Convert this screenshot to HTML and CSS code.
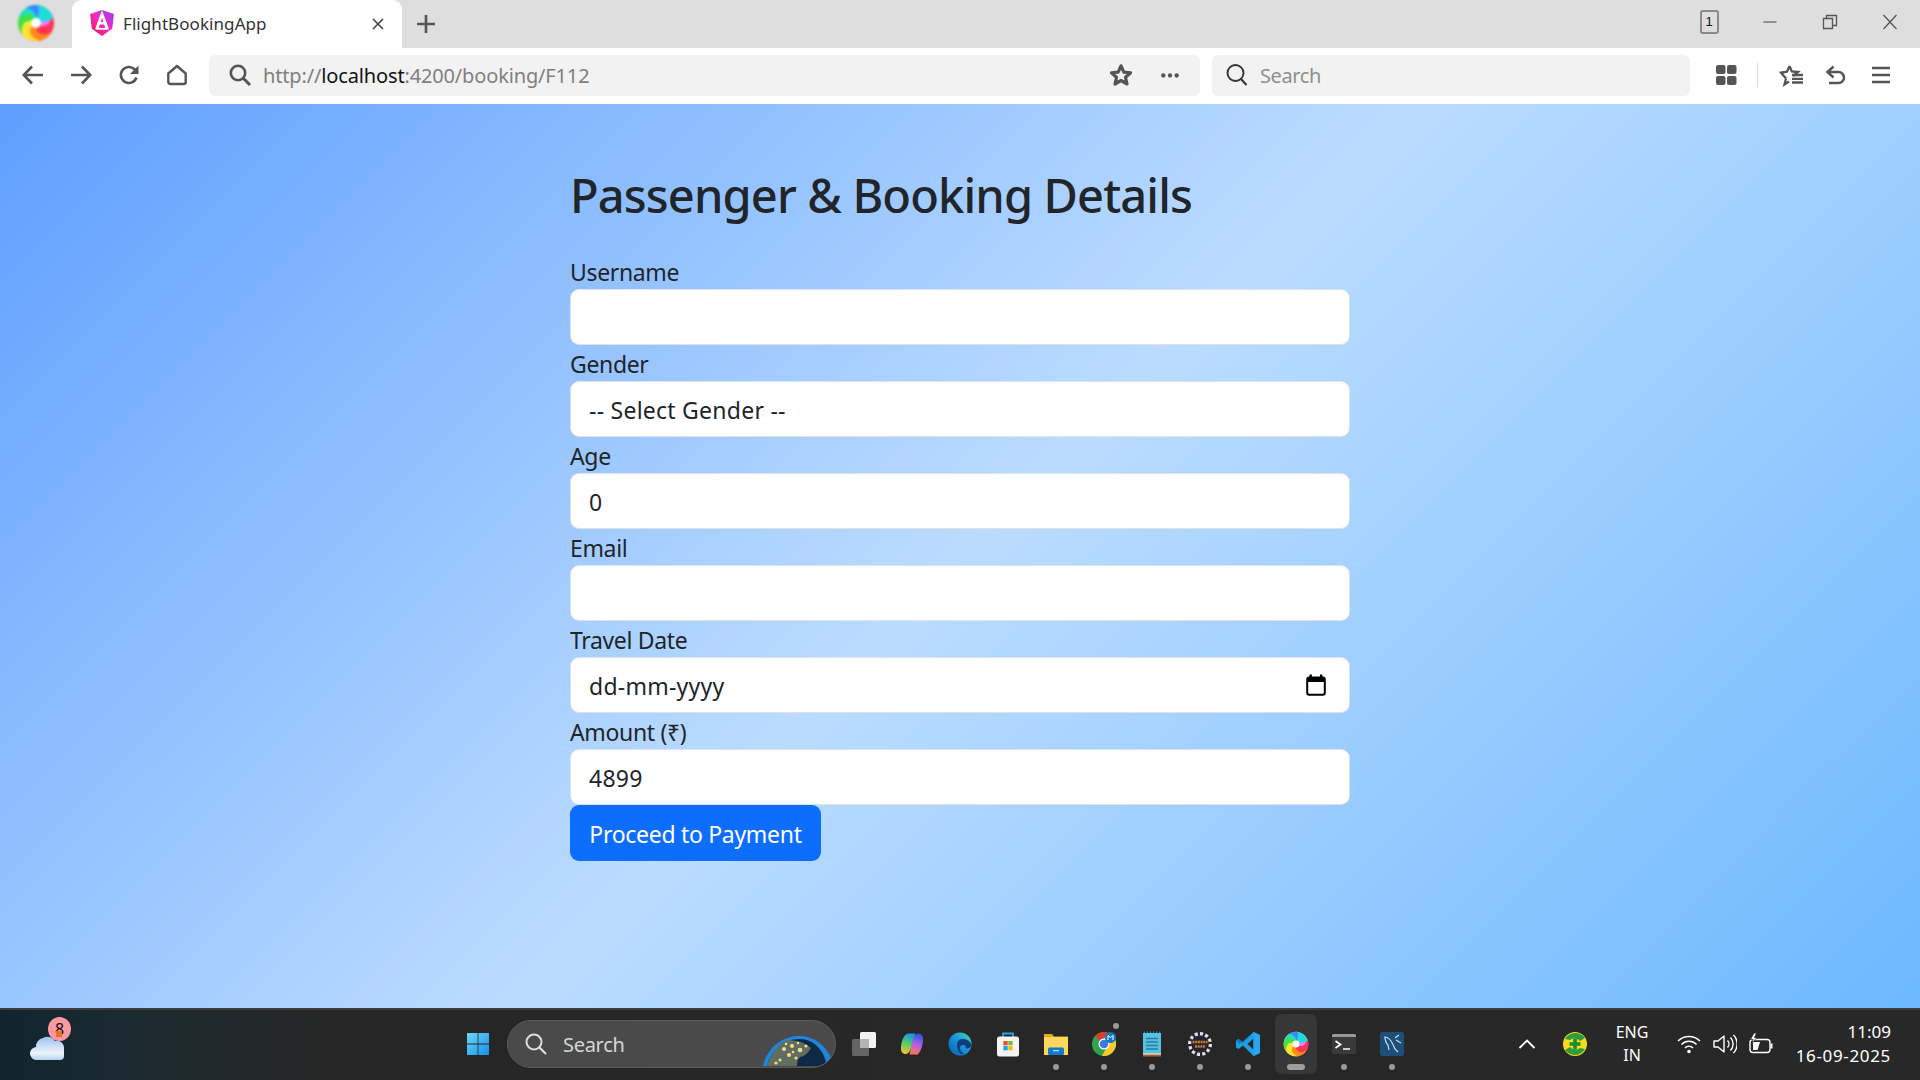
FILE: index.html
```html
<!DOCTYPE html>
<html lang="en">
<head>
<meta charset="utf-8">
<title>FlightBookingApp</title>
<link rel="stylesheet" href="styles.css">
</head>
<body>
<svg class="defs" width="0" height="0" aria-hidden="true">
  <symbol id="swirl" viewBox="-19 -19 38 38">
    <path fill="#f07cff" d="M0-18A18 18 0 0 1 9 15.600C4 10 1 5 3.500-2 10-6 8-14 0-18Z"/>
    <path fill="#ff3350" transform="rotate(60)" d="M0-18A18 18 0 0 1 9 15.600C4 10 1 5 3.500-2 10-6 8-14 0-18Z"/>
    <path fill="#ff8a1a" transform="rotate(120)" d="M0-18A18 18 0 0 1 9 15.600C4 10 1 5 3.500-2 10-6 8-14 0-18Z"/>
    <path fill="#ffe433" transform="rotate(170)" d="M0-18A18 18 0 0 1 9 15.600C4 10 1 5 3.500-2 10-6 8-14 0-18Z"/>
    <path fill="#3fe24a" transform="rotate(230)" d="M0-18A18 18 0 0 1 9 15.600C4 10 1 5 3.500-2 10-6 8-14 0-18Z"/>
    <path fill="#1fdcd8" transform="rotate(285)" d="M0-18A18 18 0 0 1 9 15.600C4 10 1 5 3.500-2 10-6 8-14 0-18Z"/>
    <path fill="#3d86ff" transform="rotate(325)" d="M0-18A18 18 0 0 1 12-13.400C10-9 7-5 3-3 6-8 5-14 0-18Z"/>
    <circle r="5" fill="#fff"/>
  </symbol>
</svg>
<div class="window">
  <header class="tabbar">
    <div class="logo-slot"><svg class="swirl swirl-lg" width="38" height="38"><use href="#swirl"/></svg></div>
    <div class="tab">
      <svg class="favicon" viewBox="0 0 24 24" width="26" height="26">
        <defs><linearGradient id="ng" x1="0" y1="1" x2="1" y2="0"><stop offset="0" stop-color="#f0124f"/><stop offset=".5" stop-color="#f02dc0"/><stop offset="1" stop-color="#9a3cf0"/></linearGradient></defs>
        <path fill="url(#ng)" d="M12 0 23 3.800 21.400 17.200 12 24 2.600 17.200 1 3.800Z"/>
        <path fill="#fff" fill-rule="evenodd" d="M12 0 18 16.500H15.200L14 13.400H10L8.800 16.500H6ZM12 7 10.800 11H13.200Z"/>
        <path fill="#fff" d="M6 16.500h12v1.700H6z"/>
      </svg>
      <span class="tab-title">FlightBookingApp</span>
      <svg class="tab-close" viewBox="0 0 14 14" width="14" height="14"><path d="M2 2l10 10M12 2 2 12" stroke="#444" stroke-width="1.600" fill="none"/></svg>
    </div>
    <div class="slot-48"><svg viewBox="0 0 20 20" width="20" height="20"><path d="M10 1v18M1 10h18" stroke="#555" stroke-width="2.600"/></svg></div>
    <div class="spring"></div>
    <div class="winbtn"><span class="counter">1</span></div>
    <div class="winbtn"><svg viewBox="0 0 16 16" width="16" height="16"><path d="M1.500 8h13" stroke="#666" stroke-width="1.300"/></svg></div>
    <div class="winbtn"><svg viewBox="0 0 16 16" width="16" height="16"><path d="M1.500 4.500h9v10h-9zM4.500 4.500v-3h10v10h-4" fill="none" stroke="#555" stroke-width="1.300"/></svg></div>
    <div class="winbtn"><svg viewBox="0 0 16 16" width="16" height="16"><path d="M1.500 1 14.500 15M14.500 1 1.500 15" stroke="#555" stroke-width="1.300"/></svg></div>
  </header>

  <nav class="toolbar">
    <div class="slot-48"><svg viewBox="0 0 24 24" width="24" height="24"><path d="M22 12H3M11 3.500 2.800 12l8.200 8.500" fill="none" stroke="#555" stroke-width="2.600"/></svg></div>
    <div class="slot-48"><svg viewBox="0 0 24 24" width="24" height="24"><path d="M2 12h19M13 3.500l8.200 8.500-8.200 8.500" fill="none" stroke="#555" stroke-width="2.600"/></svg></div>
    <div class="slot-48"><svg viewBox="0 0 24 24" width="24" height="24"><path d="M19.500 14.500A8 8 0 1 1 17.500 6.200L20 8.500" fill="none" stroke="#555" stroke-width="2.600"/><path d="M21.500 2.500v8.500h-8.500z" fill="#555"/></svg></div>
    <div class="slot-48"><svg viewBox="0 0 24 24" width="24" height="24"><path d="M3.300 10.500 12 3l8.700 7.500v8.500a2 2 0 0 1-2 2H5.300a2 2 0 0 1-2-2Z" fill="none" stroke="#555" stroke-width="2.400" stroke-linejoin="round"/></svg></div>
    <div class="urlbar">
      <svg class="url-icon" viewBox="0 0 24 24" width="24" height="24"><circle cx="10" cy="10" r="7.200" fill="none" stroke="#555" stroke-width="2.600"/><path d="M15.500 15.500 22 22" stroke="#555" stroke-width="3"/></svg>
      <span class="url"><span class="url-dim">http://</span>localhost<span class="url-dim">:4200/booking/F112</span></span>
      <div class="spring"></div>
      <div class="url-action"><svg viewBox="0 0 24 24" width="24" height="24"><path d="M12 2.800l2.800 6.300 6.800.7-5.100 4.500 1.500 6.700-6-3.500-6 3.500 1.500-6.700-5.100-4.500 6.800-.7Z" fill="none" stroke="#555" stroke-width="3.200" stroke-linejoin="round"/></svg></div>
      <div class="url-action"><svg viewBox="0 0 24 8" width="20" height="7"><circle cx="4" cy="4" r="2.600" fill="#555"/><circle cx="12" cy="4" r="2.600" fill="#555"/><circle cx="20" cy="4" r="2.600" fill="#555"/></svg></div>
    </div>
    <div class="searchbar">
      <svg viewBox="0 0 24 24" width="24" height="24"><circle cx="10.500" cy="10" r="8" fill="none" stroke="#333" stroke-width="1.900"/><path d="M16 16l5.500 6" stroke="#333" stroke-width="2.100"/></svg>
      <span class="search-text">Search</span>
    </div>
    <div class="tool tool-apps"><svg viewBox="0 0 24 24" width="24" height="24"><rect x="2" y="2" width="9.500" height="9" rx="2" fill="#555"/><rect x="13" y="2" width="9.500" height="9" rx="2" fill="#555"/><rect x="2" y="13" width="9.500" height="9" rx="2" fill="#555"/><rect x="13" y="13" width="9.500" height="9" rx="2" fill="#555"/></svg></div>
    <div class="tool-divider"></div>
    <div class="tool"><svg viewBox="0 0 26 24" width="26" height="24"><path d="M11.500 3l2.300 5.500 6.200.5-4.700 4M8 15.500 6.500 21.500l4.500-3M8 15.500 3 9.500l6-.8L11.500 3" fill="none" stroke="#555" stroke-width="2.300"/><path d="M14 12h11M14 15.800h11M14 19.500h11" stroke="#555" stroke-width="2.300"/></svg></div>
    <div class="tool"><svg viewBox="0 0 24 24" width="24" height="24"><path d="M6 9h9.500a5.500 5.500 0 0 1 0 11H6" fill="none" stroke="#555" stroke-width="2.500"/><path d="M10.500 3.500 4.500 9l6 5.500" fill="none" stroke="#555" stroke-width="2.500"/></svg></div>
    <div class="tool tool-menu"><svg viewBox="0 0 24 24" width="24" height="24"><path d="M3 5h18M3 12h18M3 19h18" stroke="#555" stroke-width="2.600"/></svg></div>
  </nav>

  <main class="page">
    <form class="booking">
      <h1 class="booking-title">Passenger &amp; Booking Details</h1>
      <label class="label" for="username">Username</label>
      <input class="control" id="username" type="text">
      <label class="label" for="gender">Gender</label>
      <select class="control" id="gender"><option>-- Select Gender --</option></select>
      <label class="label" for="age">Age</label>
      <input class="control" id="age" type="text" value="0">
      <label class="label" for="email">Email</label>
      <input class="control" id="email" type="text">
      <span class="label">Travel Date</span>
      <div class="control control-date">
        <span>dd-mm-yyyy</span>
        <svg viewBox="0 0 20 22" width="20" height="22"><rect x="1.200" y="3.500" width="17.600" height="17.300" rx="2" fill="#fff" stroke="#000" stroke-width="2"/><path d="M1 3.500h18v4.500H1z" fill="#000"/><rect x="3.500" y="0.500" width="2.400" height="4" fill="#000"/><rect x="14" y="0.500" width="2.400" height="4" fill="#000"/></svg>
      </div>
      <label class="label" for="amount">Amount (₹)</label>
      <input class="control" id="amount" type="text" value="4899">
      <button class="submit" type="button">Proceed to Payment</button>
    </form>
  </main>

  <footer class="taskbar">
    <div class="widget">
      <span class="badge">8</span>
      <svg class="cloud" viewBox="0 0 38 30" width="38" height="30"><defs><linearGradient id="cl" x1="0" y1="0" x2="0" y2="1"><stop offset="0" stop-color="#9dbfee"/><stop offset=".7" stop-color="#eef5fd"/><stop offset="1" stop-color="#b5d0f2"/></linearGradient></defs><rect x="26" y="0" width="6" height="6" fill="#e8731c"/><path d="M7 29a6.500 6.500 0 0 1-1-13 8.500 8.500 0 0 1 7-9 9 9 0 0 1 12 3 7 7 0 0 1 9 7v8a4 4 0 0 1-4 4Z" fill="url(#cl)"/></svg>
    </div>
    <div class="slot-48 slot-start"><svg viewBox="0 0 24 24" width="24" height="24"><defs><linearGradient id="wn" x1="0" y1="0" x2="1" y2="1"><stop offset="0" stop-color="#6fd6fb"/><stop offset="1" stop-color="#1590e8"/></linearGradient></defs><path fill="url(#wn)" d="M1 1h10.600v10.600H1zM12.400 1H23v10.600H12.400zM1 12.400h10.600V23H1zM12.400 12.400H23V23H12.400z"/></svg></div>
    <div class="task-search">
      <svg viewBox="0 0 24 24" width="24" height="24"><circle cx="10" cy="10" r="7.500" fill="none" stroke="#ddd" stroke-width="2"/><path d="M15.500 15.500 22 22" stroke="#ddd" stroke-width="2.200"/></svg>
      <span class="task-search-text">Search</span>
      <svg class="globe" viewBox="0 0 70 30" width="70" height="30"><path d="M1 30C5 12 20 0 37 0c14 0 26 8 32 22-3 4-5 6-9 8Z" fill="#1f86dd"/><path d="M5 30C9 14 22 3 37 3c13 0 23 8 27 23-2 2-3 3-6 4Z" fill="#0c2a47"/><path d="M5 30c3-10 8-20 20-26 9 0 17 2 24 8-3 5-6 8-11 9-3 3-3 6-3 9Z" fill="#5f6e5e"/><g fill="#f6dd8e"><circle cx="22" cy="13" r="2"/><circle cx="30" cy="10" r="2"/><circle cx="38" cy="14" r="2.300"/><circle cx="44" cy="10" r="1.600"/><circle cx="27" cy="19" r="2"/><circle cx="18" cy="24" r="1.500"/><circle cx="34" cy="22" r="1.600"/><circle cx="14" cy="27" r="1.600"/><circle cx="24" cy="8" r="1.300"/><circle cx="36" cy="7" r="1.300"/><circle cx="31" cy="16" r="1.300"/></g></svg>
    </div>
    <div class="apps">
      <div class="slot-48"><svg viewBox="0 0 26 26" width="26" height="26"><rect x="9" y="1" width="16" height="16" rx="1.500" fill="#f3f3f3"/><rect x="1" y="8" width="17" height="17" rx="1.500" fill="#6b6b6b" fill-opacity=".9"/><rect x="9" y="8" width="9" height="9" fill="#b5b5b5"/></svg></div>
      <div class="slot-48"><svg viewBox="0 0 24 24" width="24" height="24"><defs><linearGradient id="cpa" x1=".6" y1="0" x2=".4" y2="1"><stop offset="0" stop-color="#1593e6"/><stop offset=".5" stop-color="#4fcf66"/><stop offset="1" stop-color="#f6c02c"/></linearGradient><linearGradient id="cpb" x1=".6" y1="0" x2=".4" y2="1"><stop offset="0" stop-color="#2259d8"/><stop offset=".5" stop-color="#b45ee6"/><stop offset="1" stop-color="#ff7458"/></linearGradient></defs><path d="M8 1.500h7.500L12 13c-1.200 5-3 9-6.500 9C2.500 22 .5 19.500 1 15 1.500 9 4 2 8 1.500Z" fill="url(#cpa)"/><path d="M16 22.500H9.500L12 11c1.200-5 3-9.500 6.500-9.500 3 0 5 2.500 4.500 7-.5 6-3 14-7 14.500Z" fill="url(#cpb)"/></svg></div>
      <div class="slot-48"><svg viewBox="0 0 24 24" width="24" height="24"><defs><linearGradient id="edg" x1="0" y1="1" x2="1" y2="0"><stop offset="0" stop-color="#0c59a4"/><stop offset=".6" stop-color="#1b9de2"/><stop offset="1" stop-color="#4fdc9c"/></linearGradient></defs><circle cx="12" cy="12" r="11.500" fill="url(#edg)"/><path d="M9 12c0-3 2.500-5 6-5 4 0 8 2.500 8.500 6.500-1 3-4.500 3.500-6 2.500 1-1.500 0-3-2.500-3-2 0-3.500 1.500-3 4 .4 2 2 3.500 4 4.500-1 .4-2 .5-3 .5-3-1.500-4-6-4-10Z" fill="#0f3f7c"/></svg></div>
      <div class="slot-48"><svg viewBox="0 0 24 26" width="24" height="26"><path d="M7 6V2.500h10V6" fill="none" stroke="#2ba6e8" stroke-width="1.800"/><rect x="1" y="5.500" width="22" height="20" rx="2.500" fill="#f4f4f4"/><rect x="7.400" y="10" width="4.300" height="4.300" fill="#e8512a"/><rect x="12.300" y="10" width="4.300" height="4.300" fill="#7bb92c"/><rect x="7.400" y="15" width="4.300" height="4.300" fill="#1fa1e8"/><rect x="12.300" y="15" width="4.300" height="4.300" fill="#fbb813"/></svg></div>
      <div class="slot-48 has-dot"><svg viewBox="0 0 24 22" width="24" height="22"><path d="M0 1h8l2 2.500h14V21H0Z" fill="#e6a820"/><rect y="4" width="24" height="18" fill="#ffd75e"/><rect x="4" y="14.500" width="16" height="7.500" rx="1.500" fill="#1578c9"/><rect x="9" y="17" width="6" height="1.200" fill="#bfe0f7"/></svg></div>
      <div class="slot-48 has-dot has-flag"><svg viewBox="0 0 24 24" width="24" height="24"><circle cx="12" cy="12" r="12" fill="#2ea44f"/><path d="M12 0a12 12 0 0 1 10.400 6H12a6 6 0 0 0-5.200 3L3.500 3.500A12 12 0 0 1 12 0Z" fill="#dd3b2e"/><path d="M22.400 6A12 12 0 0 1 10 23.800L15 15l-3-9Z" fill="#f8c92b"/><circle cx="12" cy="12" r="5.500" fill="#fff"/><circle cx="12" cy="12" r="4.300" fill="#3b78e0"/><circle cx="18.500" cy="5.500" r="5.500" fill="#1579c2"/><path d="M16 8V3.500l2.500 2 2.500-2V8" fill="none" stroke="#fff" stroke-width="1"/></svg></div>
      <div class="slot-48 has-dot"><svg viewBox="0 0 20 26" width="20" height="26"><rect x="1" y="2" width="18" height="21" fill="#5cbfe0"/><path d="M1 23h18v2.500H1z" fill="#a8612b"/><path d="M1 22.500h18v1H1z" fill="#f4f4f4"/><path d="M4 7.500h12M4 11h12M4 14.500h12M4 18h12" stroke="#1f7fa8" stroke-width="1.600"/><path d="M2.500 2V.5M5.500 2V.5M8.500 2V.5M11.500 2V.5M14.500 2V.5M17.500 2V.5" stroke="#2a93bb" stroke-width="1"/></svg></div>
      <div class="slot-48 has-dot"><svg viewBox="0 0 24 24" width="24" height="24"><circle cx="12" cy="12" r="10" fill="none" stroke="#e2e2e2" stroke-width="4" stroke-dasharray="3 2.200"/><circle cx="12" cy="12" r="8.800" fill="#262633"/><path d="M4.500 10h15M7 14.500h10" stroke="#d07a28" stroke-width="2.400" stroke-dasharray="2 .7"/></svg></div>
      <div class="slot-48 has-dot"><svg viewBox="0 0 24 24" width="24" height="24"><path d="M17.500 0 24 3v18l-6.500 3L7 13.500 2.500 17 0 15.500V8.500L2.500 7 7 10.500Zm0 6.500L11.500 12l6 5.500Z" fill="#1f9ce6"/><path d="M17.500 0 24 3v18l-6.500 3Z" fill="#2aa6f0"/><path d="M17.500 0 7 10.500l-4.500-3.500L0 8.500l3.500 3.500" fill="#0f78c2"/></svg></div>
      <div class="slot-48 app-active"><svg class="swirl swirl-sm" width="26" height="26"><use href="#swirl"/></svg></div>
      <div class="slot-48 has-dot"><svg viewBox="0 0 24 22" width="24" height="22"><rect y="1" width="24" height="20" rx="1.500" fill="#3a3a3a"/><path d="M0 2.500a1.500 1.500 0 0 1 1.500-1.500h21A1.500 1.500 0 0 1 24 2.500V4H0Z" fill="#999"/><path d="M3.500 8l5 3.500-5 3.500" fill="none" stroke="#fff" stroke-width="1.700"/><path d="M11 16h7" stroke="#fff" stroke-width="1.500"/></svg></div>
      <div class="slot-48 has-dot"><svg viewBox="0 0 24 24" width="24" height="24"><rect width="24" height="24" rx="2.500" fill="#1e4f7a"/><path d="M4 5c3 0 5 1 7 4 2 3 3 6 4 8l3 3M5 5c0 4 1 6 3 8l1 5M15 6l4-3M16 8l5 3" fill="none" stroke="#cfdde8" stroke-width="1.200"/></svg></div>
    </div>
    <div class="spring"></div>
    <div class="tray">
      <div class="slot-48"><svg viewBox="0 0 18 12" width="18" height="12"><path d="M1.500 10 9 2.500 16.500 10" fill="none" stroke="#fff" stroke-width="1.800"/></svg></div>
      <div class="slot-48"><svg viewBox="0 0 24 24" width="24" height="24"><circle cx="12" cy="12" r="12" fill="#f7dc1c"/><path d="M2 7a12 12 0 0 1 20-1l-5 3a7 7 0 0 0-10-1ZM22 17a12 12 0 0 1-20 1l5-3a7 7 0 0 0 10 1Z" fill="#2f9a3f"/><path d="M12 6.500v11M6.500 12h11" stroke="#1b8a33" stroke-width="3.600"/></svg></div>
      <div class="lang"><span>ENG</span><span>IN</span></div>
      <div class="tray-icon tray-wifi"><svg viewBox="0 0 24 20" width="24" height="20"><path d="M1 7a15.500 15.500 0 0 1 22 0M4.500 10.500a10.500 10.500 0 0 1 15 0M8 14a5.500 5.500 0 0 1 8 0" fill="none" stroke="#fff" stroke-width="1.500"/><circle cx="12" cy="17.500" r="1.800" fill="#fff"/></svg></div>
      <div class="tray-icon"><svg viewBox="0 0 24 20" width="24" height="20"><path d="M1 7h4l6-5v16l-6-5H1Z" fill="none" stroke="#fff" stroke-width="1.400" stroke-linejoin="round"/><path d="M14.500 6.500a5 5 0 0 1 0 7M17.500 3.500a9.500 9.500 0 0 1 0 13M20.500 1a13 13 0 0 1 0 18" fill="none" stroke="#fff" stroke-width="1.400"/></svg></div>
      <div class="tray-icon"><svg viewBox="0 0 24 22" width="24" height="22"><rect x="1" y="6.500" width="20" height="13" rx="3" fill="none" stroke="#fff" stroke-width="1.400"/><path d="M22.500 10.500v5" stroke="#fff" stroke-width="2"/><path d="M4 17V9h7l-2.500 8Z" fill="#fff"/><path d="M5 0 1.500 6.500H4L2.500 11 8 4.500H5.500L7.500 0Z" fill="#fff" stroke="#282828" stroke-width=".8"/></svg></div>
      <div class="clock"><span>11:09</span><span class="clock-date">16-09-2025</span></div>
    </div>
  </footer>
</div>
</body>
</html>
```

FILE: styles.css
```css
* { box-sizing: border-box; }
html, body { margin: 0; height: 100%; }
body { font-family: "Noto Sans", "Open Sans", sans-serif; color: #212529; overflow: hidden; }
svg { display: block; flex: none; }
.defs { position: absolute; }

.window { display: flex; flex-direction: column; height: 100vh; }
.spring { flex: 1; }
.slot-48 { width: 48px; flex: none; height: 100%; display: flex; align-items: center; justify-content: center; position: relative; }

/* tab strip */
.tabbar { height: 48px; flex: none; background: #dedede; display: flex; }
.logo-slot { width: 72px; display: flex; align-items: center; justify-content: center; padding-bottom: 2px; }
.tab { width: 330px; background: #fff; border-radius: 9px 9px 0 0; display: flex; align-items: center; padding: 0 17px 2px 17px; }
.tab-title { margin-left: 8px; font-size: 17px; letter-spacing: .07px; color: #333; }
.tab-close { margin-left: auto; margin-bottom: -2px; }
.winbtn { width: 60px; display: flex; align-items: center; justify-content: center; padding-bottom: 5px; }
.counter { width: 19px; height: 24px; margin-right: 2px; border: 2px solid #8a8a8a; border-radius: 3px; font: 13px/20px "Liberation Sans", sans-serif; color: #111; text-align: center; }

.swirl { filter: blur(.9px); }
.swirl-sm { filter: blur(.6px); }

/* toolbar */
.toolbar { height: 56px; flex: none; background: #fff; display: flex; align-items: center; padding: 0 0 2px 9px; }
.urlbar { width: 991px; height: 41px; margin-left: 8px; background: #f2f2f2; border-radius: 6px; display: flex; align-items: center; padding: 0 10px 0 19px; }
.url { margin-left: 11px; font-size: 20px; letter-spacing: -.15px; color: #111; white-space: nowrap; }
.url-dim { color: #808080; }
.url-action { width: 40px; display: flex; justify-content: center; }
.url-action + .url-action { margin-left: 9px; }
.searchbar { width: 478px; height: 41px; margin-left: 12px; background: #f2f2f2; border-radius: 6px; display: flex; align-items: center; padding-left: 13px; }
.search-text { margin-left: 11px; font-size: 20px; letter-spacing: -.4px; color: #8e8e8e; }
.tool { width: 44px; flex: none; display: flex; justify-content: center; }
.tool-apps { margin-left: 14px; }
.tool-divider { width: 1px; height: 24px; background: #d9d9d9; margin: 0 11px 0 9px; }
.tool-menu { margin-left: 2px; }

/* page */
.page { flex: 1; background: linear-gradient(135deg, #5f9fff 0%, #bbdcff 50%, #6cb8ff 100%); }
.booking { width: 780px; margin: 0 auto; padding-top: 63px; display: flex; flex-direction: column; }
.booking-title { margin: 0 0 30px; font-size: 47px; font-weight: 500; line-height: 56px; letter-spacing: -.86px; }
.label { display: block; height: 36px; font-size: 23px; line-height: 38px; letter-spacing: -.35px; color: #212529; }
.control { display: block; width: 100%; height: 56px; padding: 2px 18px 0; margin: 0; font: inherit; font-size: 23px; letter-spacing: .25px; color: #212529; background: #fff; border: 1px solid #dee2e6; border-radius: 9px; outline: none; appearance: none; }
.control-date { display: flex; align-items: center; justify-content: space-between; padding-right: 23px; }
.control-date svg { margin-top: -2px; }
.submit { width: 251px; height: 56px; padding: 2px 0 0; font: inherit; font-size: 23px; letter-spacing: -.3px; color: #fff; background: #0d6efd; border: 0; border-radius: 9px; text-align: center; }

/* taskbar */
.taskbar { height: 72px; flex: none; display: flex; align-items: center; padding-bottom: 2px; border-top: 2px solid #3c3c3c; background: linear-gradient(90deg, #11242e 0, #1a2a30 120px, #262626 330px, #282828 100%); color: #fff; }
.widget { position: relative; width: 38px; height: 30px; margin: 4px 0 0 30px; flex: none; }
.cloud { position: relative; }
.badge { position: absolute; left: 18px; top: -14px; width: 23px; height: 24px; border-radius: 50%; background: #fb98a2; color: #111; font-size: 16px; line-height: 24px; text-align: center; }
.slot-start { margin-left: 386px; }
.taskbar .slot-48 { height: 48px; }
.task-search { width: 329px; height: 48px; margin-left: 5px; flex: none; display: flex; align-items: center; padding-left: 16px; background: #4a4a4a; border: 1px solid #5a5a5a; border-radius: 24px; overflow: hidden; position: relative; }
.task-search-text { margin-left: 15px; font-size: 20px; letter-spacing: -.3px; color: #d6d6d6; }
.globe { margin: 14px 3px 0 auto; }
.apps { display: flex; margin-left: 4px; flex: none; }
.has-dot::after { content: ""; position: absolute; left: 21px; top: 44px; width: 6px; height: 6px; border-radius: 50%; background: #9a9a9a; }
.has-flag::before { content: ""; position: absolute; left: 33px; top: 3px; width: 6px; height: 6px; border-radius: 50%; background: #9a9a9a; }
.app-active::before { content: ""; position: absolute; left: 3px; top: -6px; width: 42px; height: 60px; border-radius: 7px; background: #373737; }
.app-active::after { content: ""; position: absolute; left: 15px; top: 44px; width: 18px; height: 6px; border-radius: 3px; background: #9e9e9e; }
.app-active .swirl { position: relative; }

.tray { display: flex; align-items: center; flex: none; padding-right: 29px; }
.tray .slot-48 { height: 40px; }
.lang { width: 66px; display: flex; flex-direction: column; align-items: center; font-size: 16px; line-height: 23px; }
.tray-icon { width: 36px; display: flex; justify-content: center; }
.tray-wifi { margin-left: 6px; }
.clock { width: 112px; display: flex; flex-direction: column; align-items: flex-end; font-size: 17px; line-height: 24px; }
.clock-date { letter-spacing: .65px; }
```
